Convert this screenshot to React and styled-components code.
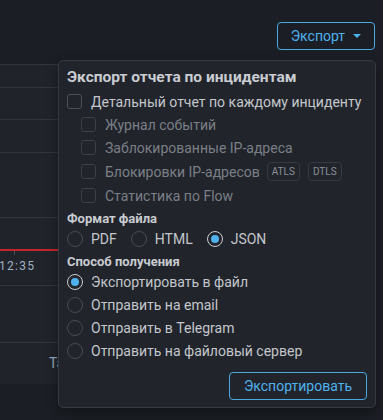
import React, { useState } from 'react'
import styled, { createGlobalStyle, css } from 'styled-components'

const GlobalStyle = createGlobalStyle`
  html, body {
    margin: 0;
    padding: 0;
    background: #1b1e24;
    font-family: Roboto, "Noto Sans", "Liberation Sans", sans-serif;
  }
  * { box-sizing: border-box; }
`

const rows = [23, 32, 33, 65, 68, 57, 42]

export default function App() {
  const [detail, setDetail] = useState(false)
  const [format, setFormat] = useState('json')
  const [delivery, setDelivery] = useState('file')

  return (
    <Page>
      <GlobalStyle />
      <Header>
        <MenuAnchor>
          <OutlineButton>
            Экспорт <Caret />
          </OutlineButton>
          <Panel>
            <Title>Экспорт отчета по инцидентам</Title>
            <CheckRow onClick={() => setDetail(!detail)}>
              <Box $checked={detail} />
              Детальный отчет по каждому инциденту
            </CheckRow>
            <CheckRow $sub $disabled>
              <Box $disabled />
              Журнал событий
            </CheckRow>
            <CheckRow $sub $disabled>
              <Box $disabled />
              Заблокированные IP-адреса
            </CheckRow>
            <CheckRow $sub $disabled $tall>
              <Box $disabled />
              Блокировки IP-адресов
              <Badge>ATLS</Badge>
              <Badge>DTLS</Badge>
            </CheckRow>
            <CheckRow $sub $disabled>
              <Box $disabled />
              Статистика по Flow
            </CheckRow>

            <Label>Формат файла</Label>
            <InlineRadios>
              {[
                ['pdf', 'PDF'],
                ['html', 'HTML'],
                ['json', 'JSON'],
              ].map(([key, text]) => (
                <RadioRow key={key} onClick={() => setFormat(key)}>
                  <Dot $checked={format === key} />
                  {text}
                </RadioRow>
              ))}
            </InlineRadios>

            <Label>Способ получения</Label>
            {[
              ['file', 'Экспортировать в файл'],
              ['email', 'Отправить на email'],
              ['telegram', 'Отправить в Telegram'],
              ['server', 'Отправить на файловый сервер'],
            ].map(([key, text]) => (
              <RadioRow key={key} onClick={() => setDelivery(key)}>
                <Dot $checked={delivery === key} />
                {text}
              </RadioRow>
            ))}

            <Footer>
              <OutlineButton $wide>Экспортировать</OutlineButton>
            </Footer>
          </Panel>
        </MenuAnchor>
      </Header>

      <Table>
        {rows.map((h, i) => (
          <Row key={i} $h={h}>
            {i === 4 && (
              <Timeline>
                <RedLine />
                <Tick />
                <TimeLabel>12:35</TimeLabel>
              </Timeline>
            )}
            {i === 6 && <CellText>Ta</CellText>}
          </Row>
        ))}
      </Table>
    </Page>
  )
}

const Page = styled.div`
  width: 383px;
  height: 420px;
  overflow: hidden;
  background: #1b1e24;
`

const Header = styled.div`
  height: 64px;
  display: flex;
  justify-content: flex-end;
  padding: 22px 8px 0 0;
`

const MenuAnchor = styled.div`
  position: relative;
  height: 28px;
`

const OutlineButton = styled.button`
  display: flex;
  align-items: center;
  gap: 6px;
  height: 28px;
  padding: 0 ${(p) => (p.$wide ? '14px' : '13px')};
  background: transparent;
  border: 1px solid #4aa9e2;
  border-radius: 4px;
  color: #4fb2ee;
  font-family: Roboto, "Liberation Sans", sans-serif;
  font-size: 14px;
  cursor: pointer;
`

const Caret = styled.span`
  width: 0;
  height: 0;
  margin-left: 2px;
  border-left: 4px solid transparent;
  border-right: 4px solid transparent;
  border-top: 4px solid #4fb2ee;
`

const Panel = styled.div`
  position: absolute;
  z-index: 5;
  top: 38px;
  right: -1px;
  width: 318px;
  padding: 6px 8px 7px 8px;
  background: #21242b;
  border: 1px solid #363941;
  border-radius: 5px;
  box-shadow: 0 4px 12px rgba(0, 0, 0, 0.35);
  color: #c4c7cc;
`

const Title = styled.div`
  font-size: 15.5px;
  font-weight: 700;
  line-height: 21px;
  color: #c9ccd1;
  margin-bottom: 2px;
`

const CheckRow = styled.div`
  display: flex;
  align-items: center;
  gap: 9px;
  height: ${(p) => (p.$tall ? '25px' : '23px')};
  padding-left: ${(p) => (p.$sub ? '14px' : '0')};
  font-size: 14px;
  color: ${(p) => (p.$disabled ? '#7b7f87' : '#c4c7cc')};
  cursor: ${(p) => (p.$disabled ? 'default' : 'pointer')};
`

const Box = styled.span`
  flex: none;
  width: 15px;
  height: 15px;
  border-radius: 3px;
  border: 1.5px solid ${(p) => (p.$disabled ? '#3b3f47' : '#4c5059')};
  ${(p) =>
    p.$checked &&
    css`
      background: #4fb2ee;
      border-color: #4fb2ee;
    `}
`

const Badge = styled.span`
  display: inline-flex;
  align-items: center;
  height: 19px;
  padding: 0 4px;
  margin-left: -2px;
  border: 1px solid #363a42;
  border-radius: 4px;
  font-size: 10px;
  color: #8c9098;
  & + & {
    margin-left: -1px;
  }
`

const Label = styled.div`
  font-size: 13px;
  font-weight: 700;
  line-height: 17px;
  color: #c9ccd1;
  margin-top: 3px;
`

const InlineRadios = styled.div`
  display: flex;
  gap: 14px;
  margin-bottom: 1px;
`

const RadioRow = styled.div`
  display: flex;
  align-items: center;
  gap: 8px;
  height: 23px;
  font-size: 14px;
  color: #c4c7cc;
  cursor: pointer;
`

const Dot = styled.span`
  flex: none;
  position: relative;
  width: 16px;
  height: 16px;
  border-radius: 50%;
  border: 1.5px solid ${(p) => (p.$checked ? '#c8cbd0' : '#474b53')};
  ${(p) =>
    p.$checked &&
    css`
      &::after {
        content: '';
        position: absolute;
        left: 50%;
        top: 50%;
        width: 8px;
        height: 8px;
        margin: -4px 0 0 -4px;
        border-radius: 50%;
        background: #4fb2ee;
      }
    `}
`

const Footer = styled.div`
  display: flex;
  justify-content: flex-end;
  margin-top: 10px;
`

const Table = styled.div`
  margin-right: 24px;
  background: #20232a;
`

const Row = styled.div`
  position: relative;
  height: ${(p) => p.$h}px;
  border-top: 1px solid #33363d;
`

const Timeline = styled.div`
  padding-top: 31px;
`

const RedLine = styled.div`
  height: 2px;
  background: #c4262b;
`

const Tick = styled.div`
  width: 1px;
  height: 4px;
  margin-left: 14px;
  background: #4a4e56;
`

const TimeLabel = styled.div`
  margin-top: 4px;
  margin-left: -1px;
  font-size: 12px;
  letter-spacing: 1.3px;
  line-height: 14px;
  color: #9fb1c2;
`

const CellText = styled.div`
  padding: 12px 0 0 49px;
  font-size: 14px;
  color: #93a6b8;
`
